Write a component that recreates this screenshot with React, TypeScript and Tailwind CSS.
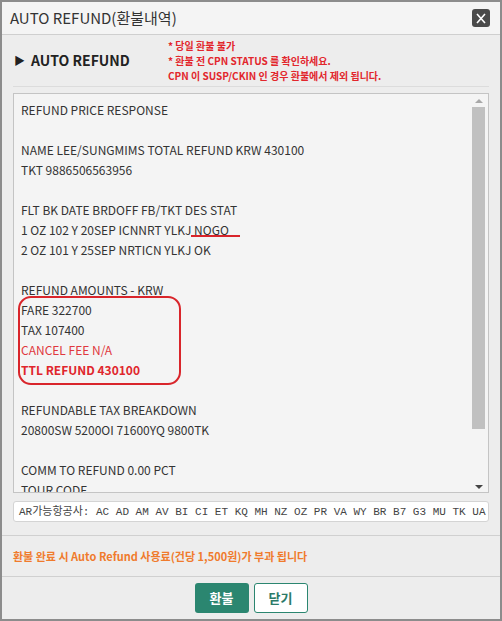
import React from 'react';

const lines: { text: string; cls?: string }[] = [
  { text: 'REFUND PRICE RESPONSE' },
  { text: '' },
  { text: 'NAME LEE/SUNGMIMS TOTAL REFUND KRW 430100' },
  { text: 'TKT 9886506563956' },
  { text: '' },
  { text: 'FLT BK DATE BRDOFF FB/TKT DES STAT' },
  { text: '1 OZ 102 Y 20SEP ICNNRT YLKJ NOGO' },
  { text: '2 OZ 101 Y 25SEP NRTICN YLKJ OK' },
  { text: '' },
  { text: 'REFUND AMOUNTS - KRW' },
  { text: 'FARE 322700' },
  { text: 'TAX 107400' },
  { text: 'CANCEL FEE N/A', cls: 'text-[#e0383e]' },
  { text: 'TTL REFUND 430100', cls: 'text-[#e0262c] font-semibold' },
  { text: '' },
  { text: 'REFUNDABLE TAX BREAKDOWN' },
  { text: '20800SW 5200OI 71600YQ 9800TK' },
  { text: '' },
  { text: 'COMM TO REFUND 0.00 PCT' },
  { text: 'TOUR CODE' },
];

const airlines = 'AC AD AM AV BI CI ET KQ MH NZ OZ PR VA WY BR B7 G3 MU TK UA';

export default function App() {
  return (
    <div className="w-[502px] h-[621px] bg-[#ededed] border-2 border-[#8c8c8c] flex flex-col font-['Noto_Sans_CJK_KR','Noto_Sans',sans-serif] text-[#333] overflow-hidden">
      <div className="h-[33px] shrink-0 bg-[#f4f4f4] border-b border-[#cfcfcf] flex items-center justify-between pl-[8px] pr-[10px]">
        <span className="text-[15px] text-[#333]">AUTO REFUND(환불내역)</span>
        <button className="w-[18px] h-[18px] rounded-[3px] bg-[#4a4a4a] flex items-center justify-center">
          <svg width="10" height="11" viewBox="0 0 10 11">
            <path d="M1 1 L9 10 M9 1 L1 10" stroke="#fff" strokeWidth="1.6" fill="none" />
          </svg>
        </button>
      </div>

      <div className="flex items-center h-[52px] shrink-0 border-b border-[#dcdcdc] mx-[11px]">
        <div className="w-[155px] flex items-center gap-[6px] pl-[1px] text-[14px] font-semibold text-[#222]">
          <span className="text-[11px]">▶</span>
          <span>AUTO REFUND</span>
        </div>
        <div className="text-[10px] leading-[15px] font-semibold text-[#e2262c]">
          <div>* 당일 환불 불가</div>
          <div>* 환불 전 CPN STATUS 를 확인하세요.</div>
          <div>CPN 이 SUSP/CKIN 인 경우 환불에서 제외 됩니다.</div>
        </div>
      </div>

      <div className="mx-[11px] mt-[6px] h-[400px] shrink-0 border border-[#c4c4c4] bg-[#f4f4f4] flex overflow-hidden">
        <div className="flex-1 relative pl-[7px] pt-[6px] text-[12px] leading-[20px] text-[#333]">
          {lines.map((l, i) => (
            <div key={i} className={'h-[20px] whitespace-pre ' + (l.cls ?? '')}>
              {l.text}
            </div>
          ))}
          <div className="absolute left-[177px] top-[141px] w-[49px] h-[2px] bg-[#d9252b]" />
          <div className="absolute left-[4px] top-[202px] w-[163px] h-[89px] border-2 border-[#d9252b] rounded-[13px]" />
        </div>
        <div className="w-[15px] mr-[2px] flex flex-col items-center pt-[5px] pb-[3px]">
          <div className="w-0 h-0 border-l-[4px] border-r-[4px] border-b-[4px] border-l-transparent border-r-transparent border-b-[#a8a8a8]" />
          <div className="w-[13px] h-[322px] bg-[#c0c0c0] mt-[4px]" />
          <div className="flex-1" />
          <div className="w-0 h-0 border-l-[4px] border-r-[4px] border-t-[4px] border-l-transparent border-r-transparent border-t-[#444]" />
        </div>
      </div>

      <div className="mx-[11px] mt-[8px] h-[21px] shrink-0 bg-white border border-[#d4d4d4] rounded-[3px] flex items-center pl-[5px] text-[11px] text-[#444] font-['Liberation_Mono','DejaVu_Sans_Mono','Noto_Sans_CJK_KR',monospace] whitespace-pre">
        <span>AR<span className="font-['Noto_Sans_CJK_KR',sans-serif]">가능항공사</span>: {airlines}</span>
      </div>

      <div className="mt-[13px] border-t border-[#d0d0d0] h-[41px] shrink-0 flex items-center pl-[11px] text-[11px] font-semibold text-[#f07b2c]">
        환불 완료 시 Auto Refund 사용료(건당 1,500원)가 부과 됩니다
      </div>

      <div className="border-t border-[#d0d0d0] flex-1 flex justify-center items-start pt-[6px] gap-[5px]">
        <button className="w-[54px] h-[30px] rounded-[3px] bg-[#2b8670] text-white text-[13px] font-semibold">
          환불
        </button>
        <button className="w-[54px] h-[30px] rounded-[3px] bg-white border border-[#2b8670] text-[#2b7a68] text-[13px] font-semibold">
          닫기
        </button>
      </div>
    </div>
  );
}
